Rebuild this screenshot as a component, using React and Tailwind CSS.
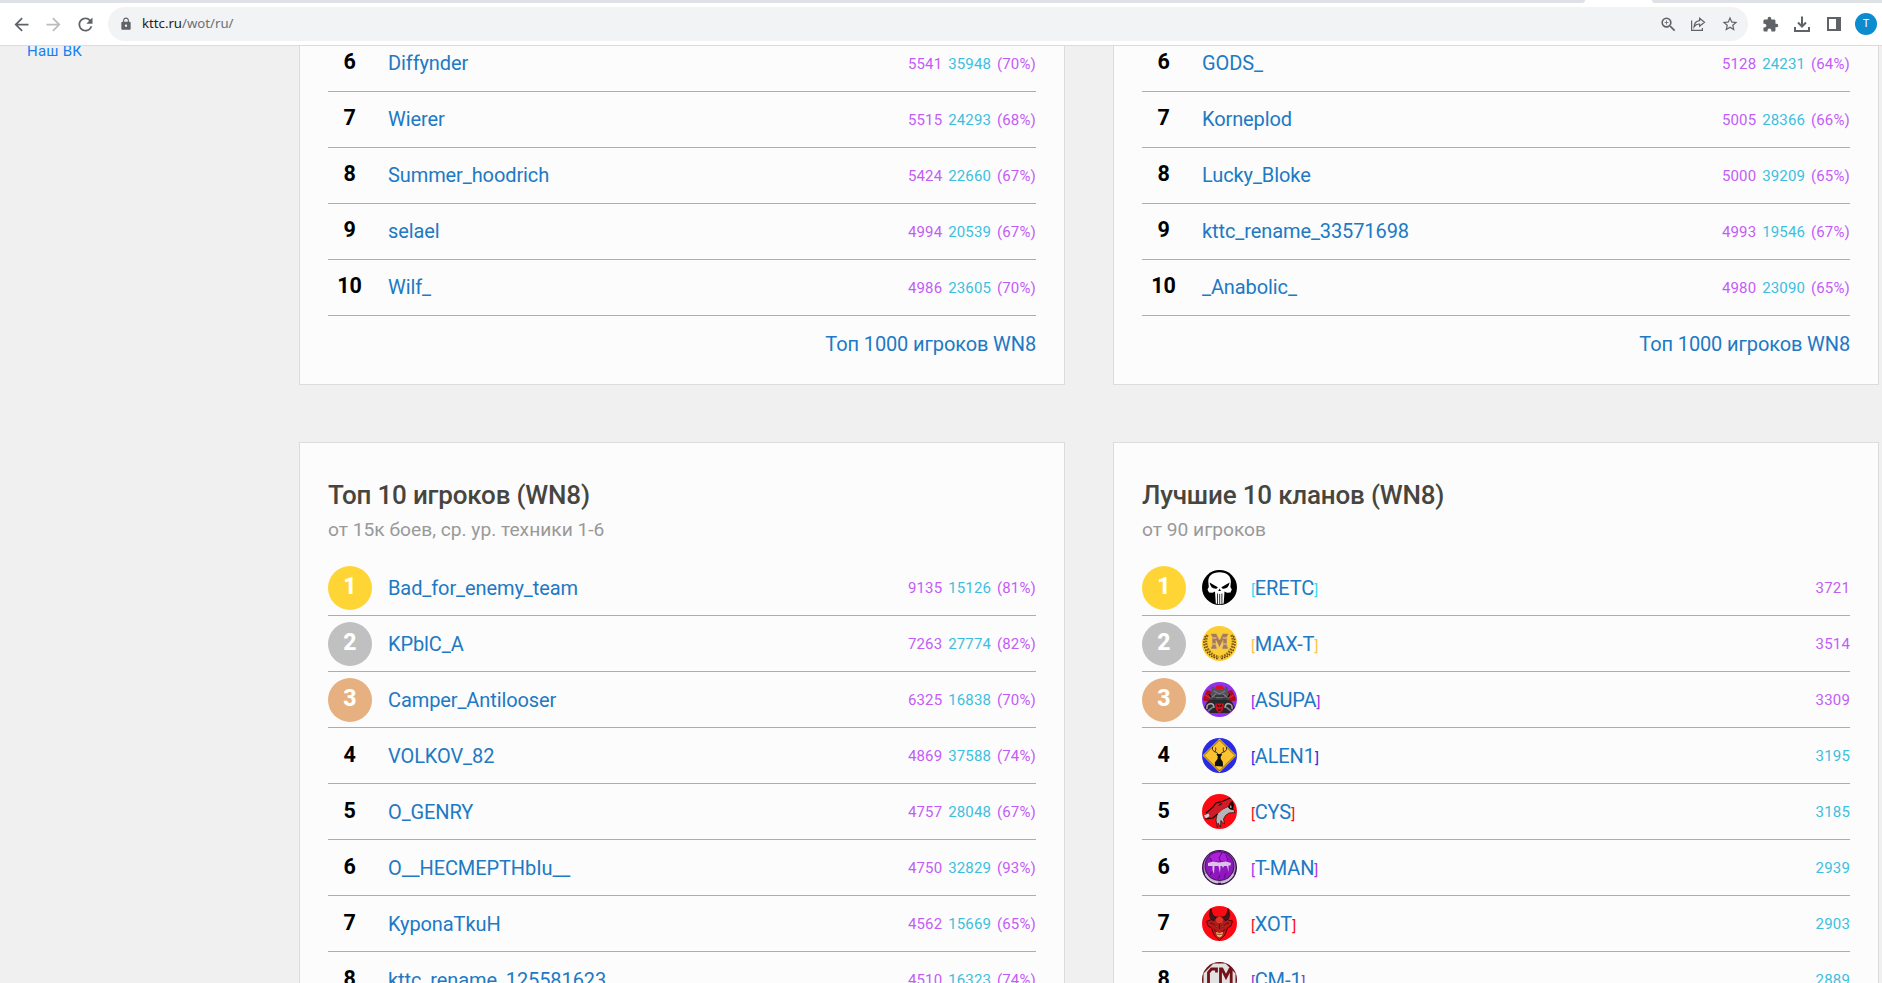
import React from "react";
import { MdArrowBack, MdArrowForward, MdRefresh, MdLock, MdZoomIn, MdStarBorder, MdExtension } from "react-icons/md";

const topLeft = [
  [6, "Diffynder", "5541", "35948", "(70%)"],
  [7, "Wierer", "5515", "24293", "(68%)"],
  [8, "Summer_hoodrich", "5424", "22660", "(67%)"],
  [9, "selael", "4994", "20539", "(67%)"],
  [10, "Wilf_", "4986", "23605", "(70%)"],
];

const topRight = [
  [6, "GODS_", "5128", "24231", "(64%)"],
  [7, "Korneplod", "5005", "28366", "(66%)"],
  [8, "Lucky_Bloke", "5000", "39209", "(65%)"],
  [9, "kttc_rename_33571698", "4993", "19546", "(67%)"],
  [10, "_Anabolic_", "4980", "23090", "(65%)"],
];

const players = [
  [1, "Bad_for_enemy_team", "9135", "15126", "(81%)"],
  [2, "KPblC_A", "7263", "27774", "(82%)"],
  [3, "Camper_Antilooser", "6325", "16838", "(70%)"],
  [4, "VOLKOV_82", "4869", "37588", "(74%)"],
  [5, "O_GENRY", "4757", "28048", "(67%)"],
  [6, "O__HECMEPTHbIu__", "4750", "32829", "(93%)"],
  [7, "KyponaTkuH", "4562", "15669", "(65%)"],
  [8, "kttc_rename_125581623", "4510", "16323", "(74%)"],
];

const purple = "text-[#c35cf6]";
const cyan = "text-[#3cbfdf]";

function Skull() {
  return (
    <g>
      <rect width="35" height="35" fill="#000" />
      <path d="M17.5 2.2C10 2.2 6 6 6.300 12L6.800 17L5.500 19.500L7 22.500L10.500 22.800L13 21.500L13.800 33.500Q17.5 34.800 21.700 33.500L22.500 21.500L25 22.800L28.500 22.500L29.800 19.500L28.400 17L28.900 12C29.100 6 25 2.2 17.5 2.2Z" fill="#fff" />
      <path d="M7.600 12.500L15.800 17.200L15 18.600Q8.800 19.500 7.600 12.500ZM27.600 12.500L19.400 17.200L20.200 18.600Q26.400 19.500 27.600 12.500ZM17.600 18.500L19 21H16.2Z" fill="#000" />
      <path d="M15.500 23.500V34M17.700 24V34M19.900 23.500V34" stroke="#000" strokeWidth="0.800" />
    </g>
  );
}

function Laurel() {
  return (
    <g>
      <rect width="35" height="35" fill="#fdce34" />
      <path d="M5.500 9Q2 17 6.500 24Q10.500 30 17 31M29.500 9Q33 17 28.500 24Q24.500 30 18 31" fill="none" stroke="#8a641c" strokeWidth="2.600" strokeDasharray="1.800 1" />
      <path d="M3.500 10Q0 17 4.200 25Q9 31.500 17 33M31.500 10Q35 17 30.800 25Q26 31.500 18 33" fill="none" stroke="#5b3c08" strokeWidth="1.400" strokeDasharray="1.600 1.200" />
      <path d="M9 7.500H14.300L17.500 14L20.700 7.500H26V10H25V20.500H26V23H20.200V20.500H21V14.500L17.500 21.500L14 14.500V20.500H14.800V23H9V20.500H10V10H9Z" fill="#a97b4b" stroke="#dcc0a0" strokeWidth="0.600" />
      <path d="M10.200 12H14.500M20.500 12H24.800M10.200 18H13.800M21.200 18H24.800" stroke="#d8b48c" strokeWidth="1.600" />
    </g>
  );
}

function Mech() {
  return (
    <g>
      <rect width="35" height="35" fill="#9130ee" />
      <path d="M13 6L15 3.500H20L22 6L21 9H14Z" fill="#e00f22" />
      <path d="M1 17L5 8L9 9L12 14L9 19H2ZM34 17L30 8L26 9L23 14L26 19H33Z" fill="#b00c1c" />
      <path d="M9 6L11 4L13 7H22L24 4L26 6L25.500 11L29 13L26 18H9L6 13L9.500 11Z" fill="#55545c" />
      <path d="M4 22Q5 18 10 18H25Q30 18 31 22L33 26L27 31H8L2 26Z" fill="#26262b" />
      <path d="M12 9L17.500 12L23 9M10 15L14 12M25 15L21 12M14 16H21" fill="none" stroke="#88868e" strokeWidth="1" />
      <path d="M13 14H22M9.500 17H25.500" stroke="#1c1a20" strokeWidth="1" />
      <path d="M5 27Q4 22 9 21.500Q12 22 12 26M30 27Q31 22 26 21.500Q23 22 23 26" fill="none" stroke="#a8a8ac" strokeWidth="1.500" />
      <path d="M6 29L11 25M29 29L24 25" stroke="#77757d" strokeWidth="1.800" />
      <path d="M13 21.500H22L21 28L17.500 31.500L14 28Z" fill="#c81224" />
      <path d="M15 23L17 24.500M20 23L18 24.500M16 28H19M7 12L9 15M28 12L26 15" stroke="#200" strokeWidth="1.200" />
      <path d="M3.500 13L7.500 16M31.500 13L27.500 16" stroke="#f02030" strokeWidth="1.300" />
    </g>
  );
}

function Deer() {
  return (
    <g>
      <rect width="35" height="35" fill="#2a2be0" />
      <path d="M17.500 0.500L34.500 17.500L17.500 34.500L0.500 17.500Z" fill="#fcc331" />
      <path d="M17.500 2L33 17.500L17.500 33L2 17.500Z" fill="none" stroke="#4b3b16" strokeWidth="0.700" />
      <path d="M14.300 16.200L16.300 16H18.300L20.300 16.200L18.900 18.500L18.600 20.500L20.800 24L21 28.500L13 28L12.800 24.500L15.500 21L15.800 18.500Z" fill="#111" />
      <path d="M16.300 16.500Q15.500 14 12 13.500Q9.800 12 10.500 9M13.200 13.600Q14.200 11.500 13.600 9.500M18.300 16.500Q19.200 14 23 13.500Q25.200 12 24.500 9M21.800 13.600Q20.800 11.500 21.400 9.500" fill="none" stroke="#111" strokeWidth="0.800" />
    </g>
  );
}

function Coyote() {
  return (
    <g>
      <rect width="35" height="35" fill="#fb0a14" />
      <path d="M15 20L20 15.500L26 12.500L28 15L31.500 15.500L33 18.500L27 19L23.500 21.500L21.500 25L22.500 30L18.800 26.500L18.500 33L16 29L15.500 34L14 26Z" fill="#b5b5b8" stroke="#26070a" strokeWidth="0.700" />
      <path d="M1.500 21L5 18L11 13L14 9L20 7.500L29.500 3.500L30 6L27 9.500L26 12.500L20 15.500L15.500 20L11 24L3 25Z" fill="#d01c26" />
      <path d="M4 19L11 13L14 9L20 7.500L29.500 3.500M15.500 20L11 24L3 25" fill="none" stroke="#1a0406" strokeWidth="1.100" />
      <path d="M26 13L27.500 9.500L30.500 6.500L32 11L31 16L28 15Z" fill="#1c0507" />
      <path d="M27.800 13.500L29 10.500L29.600 14Z" fill="#c8c8ca" />
      <path d="M2 21.500L6.500 19.500L7.500 22L4 24.500Z" fill="#d9d4d4" />
      <path d="M16.500 11.500L20 9.500" stroke="#160304" strokeWidth="1" />
    </g>
  );
}

function Medallion() {
  return (
    <g>
      <rect width="35" height="35" fill="#3c1050" />
      <circle cx="17.500" cy="17" r="16" fill="#a99cb2" />
      <circle cx="17.500" cy="16" r="15" fill="#4d0d6b" />
      <circle cx="17.500" cy="16" r="14" fill="#8e17bd" />
      <path d="M8 6Q17 -1 27 7L24 11H9Z" fill="#ad20da" />
      <path d="M6 13L11 11.500L17 12.500L24 11.500L29 13L28.500 15.500H26.500V22L25 16H22L21 18L20 16H18.500L18 23L16.500 16H12.500L12 24L10.500 20L10.500 16H6Z" fill="#dcc3e8" />
      <path d="M20 2.500L17 8L19 12M24 5L26 10M8 8L10 11M18 25L16 29M24 23L22 28M8 25L10 22" fill="none" stroke="#52096f" strokeWidth="0.900" />
      <path d="M3.500 24Q8 32 16 32.500M19 32.500Q27 32 31.500 24" fill="none" stroke="#cbc1d1" strokeWidth="1.800" />
    </g>
  );
}

function Devil() {
  return (
    <g>
      <rect width="35" height="35" fill="#fb0a14" />
      <path d="M9 14L4.500 15L6 20L9.500 22L12 29L17.500 34.500L23 29L25.500 22L29 20L30.500 15L26 14L23 11H12Z" fill="#b41a1c" stroke="#300406" strokeWidth="0.800" />
      <path d="M11.500 15Q5 12 9 2.500Q9.500 9.500 14.500 12ZM23.500 15Q30 12 26 2.500Q25.500 9.500 20.500 12Z" fill="#3d1a1b" stroke="#160304" strokeWidth="0.600" />
      <path d="M13.500 13L17.500 10L21.500 13L20 17H15Z" fill="#dc3428" />
      <path d="M11.500 18.500L16 20.300L15 21.300ZM23.500 18.500L19 20.300L20 21.300Z" fill="#e6a04c" stroke="#270305" strokeWidth="0.500" />
      <path d="M17.500 18V23M12 23L14.500 26M23 23L20.500 26M8 17L11 17.500M27 17L24 17.500" stroke="#4a080a" strokeWidth="0.800" />
      <path d="M14 26L17.500 27L21 26L20 30L17.500 31.500L15 30Z" fill="#e3bb66" />
      <path d="M15.200 28.300H19.800" stroke="#5a1a0a" strokeWidth="0.700" />
    </g>
  );
}

function Octagon() {
  return (
    <g>
      <rect width="35" height="35" fill="#6f1118" />
      <path d="M11.500 1.500H23.500L33.500 11.500V23.500L23.500 33.500H11.500L1.500 23.500V11.500Z" fill="#e2e2e2" />
      <path d="M14.500 10.500V7H9.500L6.500 10.500V24.500L9.500 28H14.500V24M18.500 28V7H20L24 15L28 7H29.200V28" fill="none" stroke="#741219" strokeWidth="2.800" />
    </g>
  );
}

const clans = [
  [1, Skull, "ERETC", "3721", "text-[#37dcf0]", true],
  [2, Laurel, "MAX-T", "3514", "text-[#fdc548]", true],
  [3, Mech, "ASUPA", "3309", "text-[#9433f2]", true],
  [4, Deer, "ALEN1", "3195", "text-[#2d2be8]", false],
  [5, Coyote, "CYS", "3185", "text-[#fb0a14]", false],
  [6, Medallion, "T-MAN", "2939", "text-[#a336f2]", false],
  [7, Devil, "XOT", "2903", "text-[#fb0a14]", false],
  [8, Octagon, "CM-1", "2889", "text-[#8b3bd0]", false],
];

const medals = { 1: "bg-[#ffd535]", 2: "bg-[#c0c0c0]", 3: "bg-[#e6b081]" };

function Rank({ n, medal, offset }) {
  if (medal) {
    return (
      <span className={`mt-[6px] flex h-11 w-11 shrink-0 justify-center rounded-full text-[23px] leading-[42px] font-extrabold text-white ${medals[n]}`}>
        {n}
      </span>
    );
  }
  return <span className={`w-[43px] mr-px shrink-0 text-center text-[21.500px] leading-[43px] font-bold tracking-[-0.2px] text-black ${offset}`}>{n}</span>;
}

const statText = "text-[15px] leading-[34px] tracking-[0.17px]";
const linkText = "text-[20px] leading-[34px] tracking-[-0.1px] text-[#2079c4]";

function PlayerRow({ row, medal, upper }) {
  const [n, name, wn8, battles, pct] = row;
  return (
    <li className="flex h-14 border-b border-[#adadad]">
      <Rank n={n} medal={medal} offset={upper ? "mt-[4px]" : "mt-[5px]"} />
      <a className={`ml-4 flex-1 ${linkText} ${upper ? "pt-[10px]" : "pt-[11px]"}`}>{name}</a>
      <span className={`flex gap-[5.8px] pt-[11px] ${statText}`}>
        <span className={purple}>{wn8}</span>
        <span className={cyan}>{battles}</span>
        <span className={purple}>{pct}</span>
      </span>
    </li>
  );
}

function ClanRow({ row }) {
  const [n, Emblem, tag, score, bracket, high] = row;
  return (
    <li className="flex h-14 border-b border-[#adadad]">
      <Rank n={n} medal={n <= 3} offset="mt-[5px]" />
      <svg viewBox="0 0 35 35" className="mt-[10px] ml-4 h-[35px] w-[35px] rounded-full">
        <Emblem />
      </svg>
      <a className={`ml-[14px] flex-1 pt-[11px] ${linkText}`}>
        <span className={`text-[15px] tracking-[-0.3px] ${bracket}`}>[</span>
        {tag}
        <span className={`text-[15px] ${bracket}`}>]</span>
      </a>
      <span className={`pt-[11px] ${statText} ${high ? purple : cyan}`}>{score}</span>
    </li>
  );
}

function TopCard({ rows }) {
  return (
    <section className="h-[339px] border border-t-0 border-[#dcdcdc] bg-[#fcfcfc] px-7">
      <ul className="-mt-[10px]">
        {rows.map((r) => (
          <PlayerRow key={r[0]} row={r} medal={false} upper />
        ))}
      </ul>
      <a className="block pt-[11px] text-right text-[20px] leading-[34px] tracking-[-0.12px] text-[#2079c4]">Топ 1000 игроков WN8</a>
    </section>
  );
}

function ListCard({ title, note, children }) {
  return (
    <section className="h-[600px] border border-[#dcdcdc] bg-[#fcfcfc] px-7 pt-[34px]">
      <h2 className="text-[26px] leading-9 font-medium tracking-[-0.18px] text-[#46463f]">{title}</h2>
      <p className="text-[19.2px] leading-[34px] text-[#999]">{note}</p>
      <ul className="mt-[13px]">{children}</ul>
    </section>
  );
}

function Toolbar() {
  return (
    <header className="shrink-0 border-b border-[#dadbdd] bg-white">
      <div className="flex h-[3px] bg-white">
        <div className="w-[1585px] rounded-br-[8px] bg-[#dee1e6]" />
        <div className="ml-[67px] flex-1 rounded-bl-[8px] bg-[#dee1e6]" />
      </div>
      <div className="flex h-[42px] items-center text-[#5f6368]">
        <MdArrowBack className="ml-[11px] h-[21px] w-[21px]" />
        <MdArrowForward className="ml-[11px] h-[21px] w-[21px] text-[#babcbe]" />
        <MdRefresh className="ml-[11px] h-[21px] w-[21px]" />
        <div className="ml-3 flex h-[34px] w-[1640px] items-center rounded-full bg-[#f1f3f4]">
          <MdLock className="ml-[11px] h-[14px] w-[14px]" />
          <span className="ml-[9px] flex-1 font-['Noto_Sans'] text-[13.2px] text-[#6b6f74]">
            <span className="text-[#202124]">kttc.ru</span>/wot/ru/
          </span>
          <MdZoomIn className="h-[19px] w-[19px]" />
          <svg viewBox="0 0 16 16" className="ml-[12px] h-4 w-4" fill="none" stroke="currentColor" strokeWidth="1.200">
            <path d="M1.600 4.500V14.400H12.400V12" />
            <path d="M9.600 2.200L14.500 6.300L9.600 10.300V8Q6 7.800 4 11Q4.300 5.300 9.600 4.600Z" />
          </svg>
          <MdStarBorder className="mr-[9px] ml-[15px] h-[18px] w-[18px]" />
        </div>
        <MdExtension className="ml-[14px] h-[17px] w-[17px]" />
        <svg viewBox="0 0 16 16" className="ml-[15px] h-4 w-4" fill="none" stroke="currentColor" strokeWidth="2">
          <path d="M8 0.500V10M4 6.500L8 10.500L12 6.500M1 11V15H15V11" />
        </svg>
        <svg viewBox="0 0 14 14" className="ml-[17px] h-[14px] w-[14px]" fill="currentColor">
          <path fillRule="evenodd" d="M0 0H14V14H0ZM2 2V12H9V2Z" />
        </svg>
        <div className="ml-[14px] flex h-[22px] w-[22px] items-center justify-center rounded-full bg-[#0b8ccf] text-[11px] text-white">T</div>
      </div>
    </header>
  );
}

export default function App() {
  return (
    <div className="flex h-[983px] w-[1882px] flex-col overflow-hidden bg-[#f0f0f0] font-[Roboto,sans-serif]">
      <Toolbar />
      <div className="flex min-h-0 flex-1 overflow-hidden">
        <aside className="w-[299px] shrink-0 overflow-hidden pl-[27px]">
          <a className="-mt-[6px] block text-[15px] leading-[22px] tracking-[0.25px] text-[#1580f5]">Наш ВК</a>
        </aside>
        <main className="grid w-[1580px] shrink-0 grid-cols-[766px_766px] content-start gap-x-12 gap-y-[57px]">
          <TopCard rows={topLeft} />
          <TopCard rows={topRight} />
          <ListCard title="Топ 10 игроков (WN8)" note="от 15к боев, ср. ур. техники 1-6">
            {players.map((r) => (
              <PlayerRow key={r[0]} row={r} medal={r[0] <= 3} upper={false} />
            ))}
          </ListCard>
          <ListCard title="Лучшие 10 кланов (WN8)" note="от 90 игроков">
            {clans.map((r) => (
              <ClanRow key={r[0]} row={r} />
            ))}
          </ListCard>
        </main>
      </div>
    </div>
  );
}
